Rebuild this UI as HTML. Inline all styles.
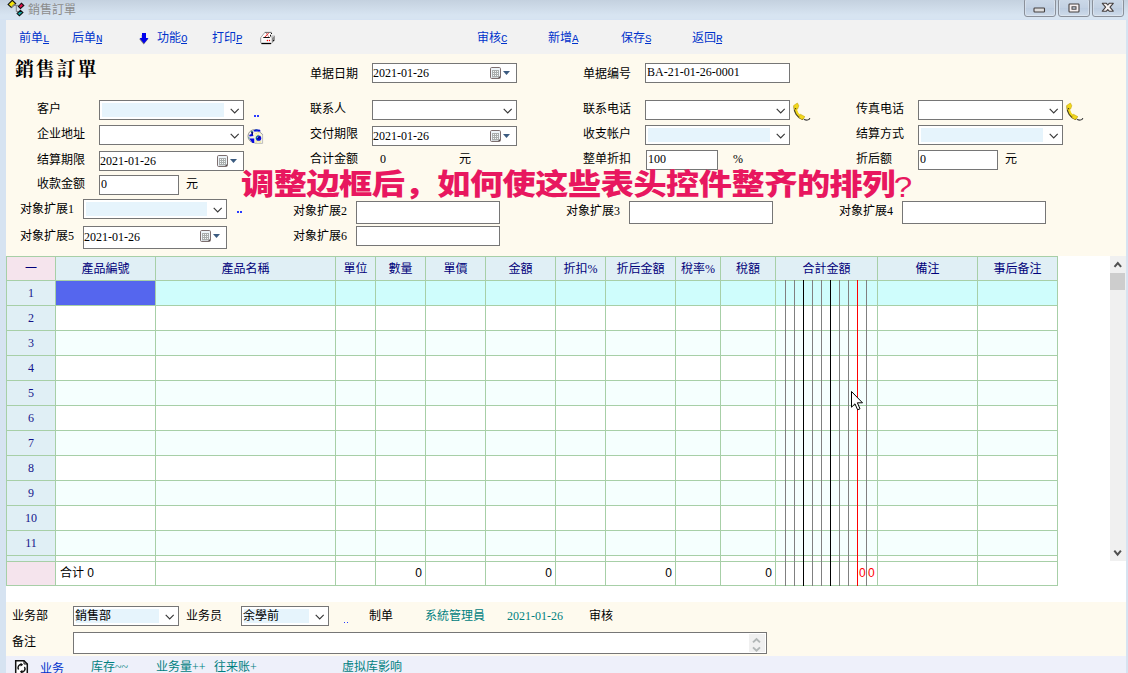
<!DOCTYPE html>
<html lang="zh">
<head>
<meta charset="utf-8">
<title>銷售訂單</title>
<style>
*{box-sizing:border-box;margin:0;padding:0}
html,body{width:1128px;height:673px;overflow:hidden;background:#d6e3f1}
body{position:relative;font-family:"Liberation Serif","Noto Sans CJK SC",sans-serif;font-size:12px;color:#000;line-height:14px}
div,span,svg{position:absolute}
#titlebar{left:0;top:0;width:1128px;height:20px;background:linear-gradient(#c4d1df 0,#d7e4f1 75%,#d7e4f1 94%,#d3e1f2 100%)}
#titletext{left:28px;top:2px;font-size:12px;color:#8c8c8c;line-height:16px;white-space:nowrap;font-family:"Liberation Sans","Noto Sans CJK TC",sans-serif;font-weight:400}
.wb{top:-2px;height:19px;border:1px solid #8a909a;border-radius:3px;background:linear-gradient(#ccd9e8 0,#c3d1e3 50%,#bccce0 52%,#cedbea 100%);box-shadow:inset 0 0 0 1px rgba(255,255,255,.3)}
#toolbar{left:6px;top:20px;width:1120px;height:34px;background:#f2f2f2}
.tb{top:31px;color:#0033cc;font-size:12px;line-height:14px;white-space:nowrap}
.tb u{font-family:"Liberation Mono",monospace;font-size:11px;letter-spacing:-.6px;text-underline-offset:1px}
#form{left:6px;top:54px;width:1120px;height:202px;background:#fefaee}
.l{font-size:12px;line-height:14px;white-space:nowrap;color:#000}
.in{height:20px;background:#fff;border:1px solid #767676;font-size:12px;line-height:16px;padding-left:1px;white-space:nowrap;overflow:hidden}
.cb{height:20px;background:#fff;border:1px solid #767676}
.cb i{position:absolute;left:2px;top:2px;right:19px;bottom:2px;background:#e6f4fc}
.cb svg{right:3px;top:7px}
.cb span{left:1px;top:2px;line-height:14px;white-space:nowrap}
.dt{height:20px;background:#fff;border:1px solid #767676;font-size:12px;line-height:17px;padding-left:0;white-space:nowrap}
.dt svg{right:4px;top:2px}
#h1{left:15px;top:58px;font-size:19px;letter-spacing:1.8px;line-height:24px;font-weight:700;font-family:"Liberation Serif","Noto Serif CJK TC",serif;color:#000;white-space:nowrap}
#big{left:241px;top:165px;font-size:29px;line-height:40px;font-weight:900;color:#e8175f;white-space:nowrap;font-family:"Liberation Sans","Noto Sans CJK SC",sans-serif;letter-spacing:-0.44px;transform:scaleX(1.145);transform-origin:0 0}
.dots{width:2px;height:2px;background:#2a3cff}
#gridbg{left:6px;top:256px;width:1120px;height:346px;background:#fff}
#grid{left:6px;top:256px;width:1052px;height:330px;background:#a7cfa7;overflow:hidden}
#grid .r{left:50px;width:1001px;height:24px}
#grid .n{left:1px;width:48px;height:24px;background:#e0eff5;color:#14148a;text-align:center;line-height:24px;font-size:12px}
#grid .h{top:1px;height:23px;background:#e0eff5;color:#00007a;text-align:center;line-height:24px;font-size:12px;white-space:nowrap;font-family:"Liberation Serif","Noto Sans CJK TC",sans-serif}
#grid .v{top:0;width:1px;height:330px;background:#a7cfa7}
#grid .m{top:24px;width:1px;height:306px;background:#808080}
#grid .f{top:306px;height:23px;line-height:22px;font-size:12px;white-space:nowrap;font-family:"Liberation Sans","Noto Sans CJK SC",sans-serif}
#sb{left:1110px;top:256px;width:16px;height:305px;background:#f0f0f0}
#bottom{left:6px;top:602px;width:1120px;height:54px;background:#fefaee}
#tabs{left:6px;top:656px;width:1120px;height:17px;background:#eef0fa}
.tl{top:660px;color:#008080;font-size:12px;line-height:14px;white-space:nowrap}
</style>
</head>
<body>
<div id="titlebar"></div>
<svg style="left:0;top:0" width="28" height="18" viewBox="0 0 28 18"><path d="M14.6 5.4 H18.6 M16.3 5.4 V11.6 H18.4" fill="none" stroke="#808080" stroke-width="1"/><path d="M12.3 0.3 L15.7 3.5 L11.4 7.6 L8.1 4.4 Z" fill="#f4e40c" stroke="#111" stroke-width="1.1"/><path d="M14.6 4.2 L11.3 7.3" fill="none" stroke="#9a9a84" stroke-width="1.1"/><path d="M21.4 3.2 L23.8 5.5 L20.5 8.6 L18.4 6.4 Z" fill="#e8104c" stroke="#111" stroke-width="1.1"/><path d="M20.5 10.3 L22.9 12.4 L19.4 15.8 L17.1 13.5 Z" fill="#10a8a8" stroke="#111" stroke-width="1.1"/></svg>
<div id="titletext">銷售訂單</div>
<div class="wb" style="left:1024px;width:32px"></div>
<div class="wb" style="left:1058px;width:32px"></div>
<div class="wb" style="left:1092px;width:32px"></div>
<svg style="left:1033px;top:6.6px" width="13" height="7" viewBox="0 0 13 7"><rect x="1" y="1" width="10.5" height="4" rx="0.7" fill="#dedede" stroke="#454040" stroke-width="1.1"/></svg>
<svg style="left:1067.5px;top:2.6px" width="13" height="11" viewBox="0 0 13 11"><rect x="1" y="1" width="10" height="8" rx="0.7" fill="#f6f0f0" stroke="#454040" stroke-width="1.1"/><rect x="4" y="3.8" width="4" height="2.4" fill="#c9d6e6" stroke="#454040" stroke-width="1"/></svg>
<svg style="left:1101px;top:2.4px" width="14" height="11" viewBox="0 0 14 11"><path d="M1.3 1.3 H5.4 L6.8 3 L8.2 1.3 H12.3 L9 5.2 L12.3 9.2 H8.2 L6.8 7.5 L5.4 9.2 H1.3 L4.6 5.2 Z" fill="#f6f2f2" stroke="#454040" stroke-width="1.1" stroke-linejoin="round"/></svg>
<div id="toolbar"></div>
<div class="tb" style="left:19px">前单<u>L</u></div>
<div class="tb" style="left:72px">后单<u>N</u></div>
<div class="tb" style="left:157px">功能<u>O</u></div>
<div class="tb" style="left:212px">打印<u>P</u></div>
<div class="tb" style="left:477px">审核<u>C</u></div>
<div class="tb" style="left:548px">新增<u>A</u></div>
<div class="tb" style="left:621px">保存<u>S</u></div>
<div class="tb" style="left:692px">返回<u>R</u></div>
<svg style="left:138px;top:33px" width="12" height="12" viewBox="0 0 12 12"><path d="M4.5 1.5 H8.5 V5.5 H11 L6.5 11 L2 5.5 H4.5 Z" fill="#777" transform="translate(-0.8,0.6)"/><path d="M4 0 H8 V5 H10.5 L6 10.5 L1.5 5 H4 Z" fill="#0000ee"/></svg>
<svg style="left:259px;top:31px" width="17" height="14" viewBox="0 0 17 14"><path d="M12.5 6.9 L15.9 4.4 V9.4 L12.5 12.4 Z" fill="#8a8a8a"/><path d="M11.4 6 L13 4.3 L15.9 4.4 L12.5 6.9 Z" fill="#c4c4c4"/><path d="M6.1 1.3 H12.9 L11.4 6.2 L2 6.6 Z" fill="#fff"/><path d="M6 1.3 L1.6 6.8" stroke="#9a9a9a" stroke-width="0.9"/><path d="M5.8 1.4 H12.6" stroke="#555" stroke-width="0.9"/><path d="M12 2h1v1h-1z M11 3.8h1v1.6h-1z M14 9h1v1.1h-1z" fill="#111"/><path d="M6 5.8 L9.6 2.2" stroke="#f01010" stroke-width="1.1" stroke-dasharray="1 0.5"/><path d="M7.4 2.3 L9.6 5.6" stroke="#a83030" stroke-width="0.9" stroke-dasharray="1 0.5"/><rect x="1.3" y="6.9" width="11.2" height="5" fill="#fafafa"/><path d="M1.7 6.9 V11.6 L2.6 12.3" fill="none" stroke="#888" stroke-width="0.9"/><path d="M4.3 6.5 H10.8" stroke="#111" stroke-width="1"/><path d="M2.4 12.5 H12.2" stroke="#000" stroke-width="1.3"/><circle cx="8.4" cy="9.5" r="0.7" fill="#f00"/><circle cx="10.5" cy="9.5" r="0.7" fill="#f00"/></svg>
<div id="form"></div>
<div id="h1">銷售訂單</div>
<div class="l" style="left:310px;top:67px">单据日期</div>
<div class="dt" style="left:372px;top:63px;width:145px;height:20px;line-height:18px">2021-01-26<svg width="22" height="14" viewBox="0 0 22 14"><rect x="0.5" y="1.5" width="10" height="11" rx="1.2" fill="#eef4f9" stroke="#7d6f6f"/><rect x="2" y="4" width="7" height="7.4" fill="#a9adad"/><path d="M3 5.5h1m1 0h1m1 0h1M3 7.5h1m1 0h1m1 0h1M3 9.5h1m1 0h1m1 0h1" stroke="#f6f8f8" stroke-width="1"/><path d="M8 12 L10 10 V12 Z" fill="#554a4a"/><path d="M13 5 H20 L16.5 9 Z" fill="#3b5b80"/></svg></div>
<div class="l" style="left:583px;top:67px">单据编号</div>
<div class="in" style="left:645px;top:63px;width:145px;height:20px;line-height:16px">BA-21-01-26-0001</div>
<div class="l" style="left:37px;top:102px">客户</div>
<div class="cb" style="left:99px;top:100px;width:145px;height:20px"><i></i><svg width="10" height="6" viewBox="0 0 10 6"><path d="M0.7 0.9 L4.7 4.9 L8.7 0.9" fill="none" stroke="#383838" stroke-width="1.15"/></svg></div>
<div class="dots" style="left:254px;top:115px;width:2px;height:2px;background:#2a3cff"></div><div class="dots" style="left:257px;top:115px;width:2px;height:2px;background:#2a3cff"></div>
<div class="l" style="left:310px;top:102px">联系人</div>
<div class="cb" style="left:372px;top:100px;width:145px;height:20px"><svg width="10" height="6" viewBox="0 0 10 6"><path d="M0.7 0.9 L4.7 4.9 L8.7 0.9" fill="none" stroke="#383838" stroke-width="1.15"/></svg></div>
<div class="l" style="left:583px;top:102px">联系电话</div>
<div class="cb" style="left:645px;top:100px;width:145px;height:20px"><svg width="10" height="6" viewBox="0 0 10 6"><path d="M0.7 0.9 L4.7 4.9 L8.7 0.9" fill="none" stroke="#383838" stroke-width="1.15"/></svg></div>
<svg style="left:792px;top:102px" width="20" height="20" viewBox="0 0 20 20"><path d="M12 17.2 C14 18.6 17.6 18.4 17.8 16" fill="none" stroke="#444" stroke-width="1.1"/><path d="M2.9 5 C2.4 10 5.8 14.6 10.4 16.6" fill="none" stroke="#4a4420" stroke-width="2.6" stroke-linecap="round"/><path d="M3.8 4.6 C3.4 9.6 6.4 13.8 10.8 15.6" fill="none" stroke="#f2d81c" stroke-width="2.4" stroke-linecap="round"/><path d="M1.6 3.6 L5.4 1 L6.8 3.8 L5.6 7 L2.4 7.4 Z" fill="#f2d81c" stroke="#c8a814" stroke-width="0.6"/><path d="M8.4 12.2 L13 14.8 L10 17.6 L7 15.6 Z" fill="#f2d81c" stroke="#c8a814" stroke-width="0.6"/><circle cx="3.6" cy="6.6" r="0.6" fill="#222"/></svg>
<div class="l" style="left:856px;top:102px">传真电话</div>
<div class="cb" style="left:918px;top:100px;width:145px;height:20px"><svg width="10" height="6" viewBox="0 0 10 6"><path d="M0.7 0.9 L4.7 4.9 L8.7 0.9" fill="none" stroke="#383838" stroke-width="1.15"/></svg></div>
<svg style="left:1065px;top:102px" width="20" height="20" viewBox="0 0 20 20"><path d="M12 17.2 C14 18.6 17.6 18.4 17.8 16" fill="none" stroke="#444" stroke-width="1.1"/><path d="M2.9 5 C2.4 10 5.8 14.6 10.4 16.6" fill="none" stroke="#4a4420" stroke-width="2.6" stroke-linecap="round"/><path d="M3.8 4.6 C3.4 9.6 6.4 13.8 10.8 15.6" fill="none" stroke="#f2d81c" stroke-width="2.4" stroke-linecap="round"/><path d="M1.6 3.6 L5.4 1 L6.8 3.8 L5.6 7 L2.4 7.4 Z" fill="#f2d81c" stroke="#c8a814" stroke-width="0.6"/><path d="M8.4 12.2 L13 14.8 L10 17.6 L7 15.6 Z" fill="#f2d81c" stroke="#c8a814" stroke-width="0.6"/><circle cx="3.6" cy="6.6" r="0.6" fill="#222"/></svg>
<div class="l" style="left:37px;top:127px">企业地址</div>
<div class="cb" style="left:99px;top:125px;width:145px;height:20px"><svg width="10" height="6" viewBox="0 0 10 6"><path d="M0.7 0.9 L4.7 4.9 L8.7 0.9" fill="none" stroke="#383838" stroke-width="1.15"/></svg></div>
<svg style="left:247px;top:128px" width="17" height="16" viewBox="0 0 17 16"><circle cx="7.6" cy="8.2" r="6.6" fill="#f3efe2" stroke="#8a8a8a" stroke-width="0.9"/><path d="M6.4 2.6 L9 1.2 L13 1.8 L13.6 3.4 H7.2 Z" fill="#0808e0"/><path d="M4.6 3.4 L6.4 3.8 L5.8 6 L6.4 8 L2.6 8.4 L2.2 7 L4.2 6 Z" fill="#0808e0"/><path d="M4.2 3.6 h1.4 v1.2 h-1.4z M5 5.2 h1 v1.4 h-1z" fill="#101010"/><path d="M2.2 10.6 H7.4 V15 H5.6 Z" fill="#0808e0"/><path d="M9.2 1.6 h1.2 v0.9 h-1.2z M1.4 9.4 h1.2 v0.9 h-1.2z M4.4 3 h0.9 v0.9 h-0.9z" fill="#109090"/><rect x="7.6" y="4.6" width="8" height="10.8" fill="#f6f3e6"/><path d="M15.6 6.4 V15.4 H8" fill="none" stroke="#b8b8b8" stroke-width="0.9"/><path d="M13.2 4.4 L15.6 6.6" stroke="#888" stroke-width="0.8"/><path d="M8.6 5.8h1m1-1h1M8.6 8h1m1-1h1m1 1h1M8.6 12h1m1 1h1M8.6 14h1m3 0h1" stroke="#f0e018" stroke-width="1"/><circle cx="11.6" cy="10.2" r="2.6" fill="#0808d8"/><path d="M9.8 12 A2.7 2.7 0 0 1 11.4 7.5" fill="none" stroke="#109090" stroke-width="0.9"/><path d="M10.4 10.4 L12.6 8.6 L12.2 10.2 Z" fill="#101010"/><path d="M10.2 9 L11.6 8.6 L10.4 10 Z" fill="#fff"/></svg>
<div class="l" style="left:310px;top:127px">交付期限</div>
<div class="dt" style="left:372px;top:126px;width:145px;height:20px;line-height:18px">2021-01-26<svg width="22" height="14" viewBox="0 0 22 14"><rect x="0.5" y="1.5" width="10" height="11" rx="1.2" fill="#eef4f9" stroke="#7d6f6f"/><rect x="2" y="4" width="7" height="7.4" fill="#a9adad"/><path d="M3 5.5h1m1 0h1m1 0h1M3 7.5h1m1 0h1m1 0h1M3 9.5h1m1 0h1m1 0h1" stroke="#f6f8f8" stroke-width="1"/><path d="M8 12 L10 10 V12 Z" fill="#554a4a"/><path d="M13 5 H20 L16.5 9 Z" fill="#3b5b80"/></svg></div>
<div class="l" style="left:583px;top:127px">收支帐户</div>
<div class="cb" style="left:645px;top:125px;width:145px;height:20px"><i></i><svg width="10" height="6" viewBox="0 0 10 6"><path d="M0.7 0.9 L4.7 4.9 L8.7 0.9" fill="none" stroke="#383838" stroke-width="1.15"/></svg></div>
<div class="l" style="left:856px;top:127px">结算方式</div>
<div class="cb" style="left:918px;top:125px;width:145px;height:20px"><i></i><svg width="10" height="6" viewBox="0 0 10 6"><path d="M0.7 0.9 L4.7 4.9 L8.7 0.9" fill="none" stroke="#383838" stroke-width="1.15"/></svg></div>
<div class="l" style="left:37px;top:153px">结算期限</div>
<div class="dt" style="left:99px;top:151px;width:145px;height:20px;line-height:18px">2021-01-26<svg width="22" height="14" viewBox="0 0 22 14"><rect x="0.5" y="1.5" width="10" height="11" rx="1.2" fill="#eef4f9" stroke="#7d6f6f"/><rect x="2" y="4" width="7" height="7.4" fill="#a9adad"/><path d="M3 5.5h1m1 0h1m1 0h1M3 7.5h1m1 0h1m1 0h1M3 9.5h1m1 0h1m1 0h1" stroke="#f6f8f8" stroke-width="1"/><path d="M8 12 L10 10 V12 Z" fill="#554a4a"/><path d="M13 5 H20 L16.5 9 Z" fill="#3b5b80"/></svg></div>
<div class="l" style="left:310px;top:152px">合计金额</div>
<div class="l" style="left:380px;top:152px">0</div>
<div class="l" style="left:459px;top:152px">元</div>
<div class="l" style="left:583px;top:152px">整单折扣</div>
<div class="in" style="left:646px;top:150px;width:72px;height:20px;line-height:16px">100</div>
<div class="l" style="left:733px;top:152px">%</div>
<div class="l" style="left:856px;top:152px">折后额</div>
<div class="in" style="left:918px;top:150px;width:80px;height:20px;line-height:16px">0</div>
<div class="l" style="left:1005px;top:152px">元</div>
<div class="l" style="left:37px;top:177px">收款金额</div>
<div class="in" style="left:99px;top:175px;width:80px;height:20px;line-height:16px">0</div>
<div class="l" style="left:186px;top:177px">元</div>
<div class="l" style="left:20px;top:202px">对象扩展1</div>
<div class="cb" style="left:83px;top:199px;width:144px;height:20px"><i></i><svg width="10" height="6" viewBox="0 0 10 6"><path d="M0.7 0.9 L4.7 4.9 L8.7 0.9" fill="none" stroke="#383838" stroke-width="1.15"/></svg></div>
<div class="dots" style="left:237px;top:211px;width:2px;height:2px;background:#2a3cff"></div><div class="dots" style="left:240px;top:211px;width:2px;height:2px;background:#2a3cff"></div>
<div class="l" style="left:293px;top:204px">对象扩展2</div>
<div class="in" style="left:356px;top:201px;width:144px;height:23px;line-height:19px"></div>
<div class="l" style="left:566px;top:204px">对象扩展3</div>
<div class="in" style="left:629px;top:201px;width:144px;height:23px;line-height:19px"></div>
<div class="l" style="left:839px;top:204px">对象扩展4</div>
<div class="in" style="left:902px;top:201px;width:144px;height:23px;line-height:19px"></div>
<div class="l" style="left:20px;top:229px">对象扩展5</div>
<div class="dt" style="left:83px;top:226px;width:144px;height:23px;line-height:21px">2021-01-26<svg width="22" height="14" viewBox="0 0 22 14"><rect x="0.5" y="1.5" width="10" height="11" rx="1.2" fill="#eef4f9" stroke="#7d6f6f"/><rect x="2" y="4" width="7" height="7.4" fill="#a9adad"/><path d="M3 5.5h1m1 0h1m1 0h1M3 7.5h1m1 0h1m1 0h1M3 9.5h1m1 0h1m1 0h1" stroke="#f6f8f8" stroke-width="1"/><path d="M8 12 L10 10 V12 Z" fill="#554a4a"/><path d="M13 5 H20 L16.5 9 Z" fill="#3b5b80"/></svg></div>
<div class="l" style="left:293px;top:229px">对象扩展6</div>
<div class="in" style="left:356px;top:226px;width:144px;height:20px;line-height:16px"></div>
<div id="big">调整边框后，如何使这些表头控件整齐的排列<span style="position:relative;top:2px;left:-1.2px;font-weight:500">?</span></div>
<div id="gridbg"></div>
<div id="grid">
<div class="h" style="left:1px;width:48px;background:#f5e4ed">一</div>
<div class="h" style="left:50px;width:99px">產品編號</div>
<div class="h" style="left:150px;width:179px">產品名稱</div>
<div class="h" style="left:330px;width:39px">單位</div>
<div class="h" style="left:370px;width:49px">數量</div>
<div class="h" style="left:420px;width:59px">單價</div>
<div class="h" style="left:480px;width:69px">金額</div>
<div class="h" style="left:550px;width:49px">折扣%</div>
<div class="h" style="left:600px;width:69px">折后金額</div>
<div class="h" style="left:670px;width:44px">稅率%</div>
<div class="h" style="left:715px;width:54px">稅額</div>
<div class="h" style="left:770px;width:101px">合計金額</div>
<div class="h" style="left:872px;width:99px">備注</div>
<div class="h" style="left:972px;width:79px">事后备注</div>
<div class="r" style="top:25px;height:24px;background:#cffdfc"></div>
<div class="n" style="top:25px;height:24px">1</div>
<div class="r" style="top:50px;height:24px;background:#fff"></div>
<div class="n" style="top:50px;height:24px">2</div>
<div class="r" style="top:75px;height:24px;background:#f5fffe"></div>
<div class="n" style="top:75px;height:24px">3</div>
<div class="r" style="top:100px;height:24px;background:#fff"></div>
<div class="n" style="top:100px;height:24px">4</div>
<div class="r" style="top:125px;height:24px;background:#f5fffe"></div>
<div class="n" style="top:125px;height:24px">5</div>
<div class="r" style="top:150px;height:24px;background:#fff"></div>
<div class="n" style="top:150px;height:24px">6</div>
<div class="r" style="top:175px;height:24px;background:#f5fffe"></div>
<div class="n" style="top:175px;height:24px">7</div>
<div class="r" style="top:200px;height:24px;background:#fff"></div>
<div class="n" style="top:200px;height:24px">8</div>
<div class="r" style="top:225px;height:24px;background:#f5fffe"></div>
<div class="n" style="top:225px;height:24px">9</div>
<div class="r" style="top:250px;height:24px;background:#fff"></div>
<div class="n" style="top:250px;height:24px">10</div>
<div class="r" style="top:275px;height:24px;background:#f5fffe"></div>
<div class="n" style="top:275px;height:24px">11</div>
<div class="r" style="top:300px;height:5px;background:#fff"></div>
<div class="n" style="top:300px;height:5px"></div>
<div style="left:50px;top:25px;width:99px;height:24px;background:#5566ee"></div>
<div class="r" style="top:306px;height:23px;background:#fff"></div>
<div class="n" style="top:306px;height:23px;background:#f5e4ed"></div>
<div class="v" style="left:49px;top:24px;height:306px"></div>
<div class="v" style="left:149px;top:24px;height:306px"></div>
<div class="v" style="left:329px;top:24px;height:306px"></div>
<div class="v" style="left:369px;top:24px;height:306px"></div>
<div class="v" style="left:419px;top:24px;height:306px"></div>
<div class="v" style="left:479px;top:24px;height:306px"></div>
<div class="v" style="left:549px;top:24px;height:306px"></div>
<div class="v" style="left:599px;top:24px;height:306px"></div>
<div class="v" style="left:669px;top:24px;height:306px"></div>
<div class="v" style="left:714px;top:24px;height:306px"></div>
<div class="v" style="left:769px;top:24px;height:306px"></div>
<div class="v" style="left:871px;top:24px;height:306px"></div>
<div class="v" style="left:971px;top:24px;height:306px"></div>
<div class="m" style="left:779px;background:#808080"></div>
<div class="m" style="left:788px;background:#808080"></div>
<div class="m" style="left:797px;background:#000"></div>
<div class="m" style="left:806px;background:#808080"></div>
<div class="m" style="left:815px;background:#808080"></div>
<div class="m" style="left:824px;background:#000"></div>
<div class="m" style="left:833px;background:#808080"></div>
<div class="m" style="left:842px;background:#808080"></div>
<div class="m" style="left:851px;background:#f00"></div>
<div class="m" style="left:860px;background:#808080"></div>
<div class="f" style="left:54px">合计 0</div>
<div class="f" style="left:379px;width:37px;text-align:right">0</div>
<div class="f" style="left:509px;width:37px;text-align:right">0</div>
<div class="f" style="left:629px;width:37px;text-align:right">0</div>
<div class="f" style="left:729px;width:37px;text-align:right">0</div>
<div class="f" style="left:853px;color:#f00">0</div>
<div class="f" style="left:862px;color:#f00">0</div>
</div>
<div id="sb"></div>
<div style="left:1110px;top:273px;width:15px;height:17px;background:#cdcdcd"></div>
<svg style="left:1113px;top:260px" width="10" height="8" viewBox="0 0 10 8"><path d="M1.5 6.9 L4.8 3 L8.1 6.9" fill="none" stroke="#505050" stroke-width="2"/></svg>
<svg style="left:1113px;top:549px" width="10" height="8" viewBox="0 0 10 8"><path d="M1.3 1.6 L4.6 5.6 L7.9 1.6" fill="none" stroke="#505050" stroke-width="2"/></svg>
<svg style="left:851px;top:391px" width="13" height="21" viewBox="0 0 13 21"><path d="M0.5 0.5 V16.2 L4 12.8 L6.6 18.8 L9 17.8 L6.4 11.8 H11.5 Z" fill="#fff" stroke="#000" stroke-width="1"/></svg>
<div id="bottom"></div>
<div id="tabs"></div>
<div class="l" style="left:12px;top:609px">业务部</div>
<div class="cb" style="left:73px;top:606px;width:106px;height:20px"><i></i><span>銷售部</span><svg width="10" height="6" viewBox="0 0 10 6"><path d="M0.7 0.9 L4.7 4.9 L8.7 0.9" fill="none" stroke="#383838" stroke-width="1.15"/></svg></div>
<div class="l" style="left:186px;top:609px">业务员</div>
<div class="cb" style="left:241px;top:606px;width:88px;height:20px"><i></i><span>余學前</span><svg width="10" height="6" viewBox="0 0 10 6"><path d="M0.7 0.9 L4.7 4.9 L8.7 0.9" fill="none" stroke="#383838" stroke-width="1.15"/></svg></div>
<div class="dots" style="left:344px;top:622px;width:1px;height:1px;background:#2a3cff"></div><div class="dots" style="left:347px;top:622px;width:1px;height:1px;background:#2a3cff"></div>
<div class="l" style="left:369px;top:609px">制单</div>
<div class="l" style="left:425px;top:609px;color:#008080">系統管理員</div>
<div class="l" style="left:507px;top:609px;color:#008080">2021-01-26</div>
<div class="l" style="left:589px;top:609px">审核</div>
<div class="l" style="left:12px;top:635px">备注</div>
<div class="in" style="left:73px;top:632px;width:694px;height:22px"></div>
<div style="left:749px;top:634px;width:16px;height:18px;background:#f0f0f0"></div>
<svg style="left:752px;top:637px" width="9" height="16" viewBox="0 0 9 16"><path d="M1 5.4 L4.5 2 L8 5.4 M1 10.4 L4.5 13.8 L8 10.4" fill="none" stroke="#b2b7b7" stroke-width="1.9"/></svg>
<svg style="left:14px;top:659px" width="15" height="15" viewBox="0 0 15 15"><path d="M1.7 15 V1.7 H10 L13.3 5 V15" fill="#fff" stroke="#111" stroke-width="1.5"/><path d="M10 1.7 V5 H13.3" fill="none" stroke="#111" stroke-width="1"/><path d="M4.6 10.5 A3.1 3.1 0 0 1 7.5 5.6 M10.4 8 A3.1 3.1 0 0 1 7.5 12.9" fill="none" stroke="#111" stroke-width="1.4"/><path d="M6.6 3.8 L9.2 5.8 L6.6 7.6 Z M8.4 10.8 L5.8 12.8 L8.4 14.8 Z" fill="#111"/></svg>
<div class="tl" style="left:40px;top:662px;color:#0033cc">业务</div>
<div class="tl" style="left:91px">库存~~</div>
<div class="tl" style="left:156px">业务量++</div>
<div class="tl" style="left:214px">往来账+</div>
<div class="tl" style="left:342px">虚拟库影响</div>
</body>
</html>
